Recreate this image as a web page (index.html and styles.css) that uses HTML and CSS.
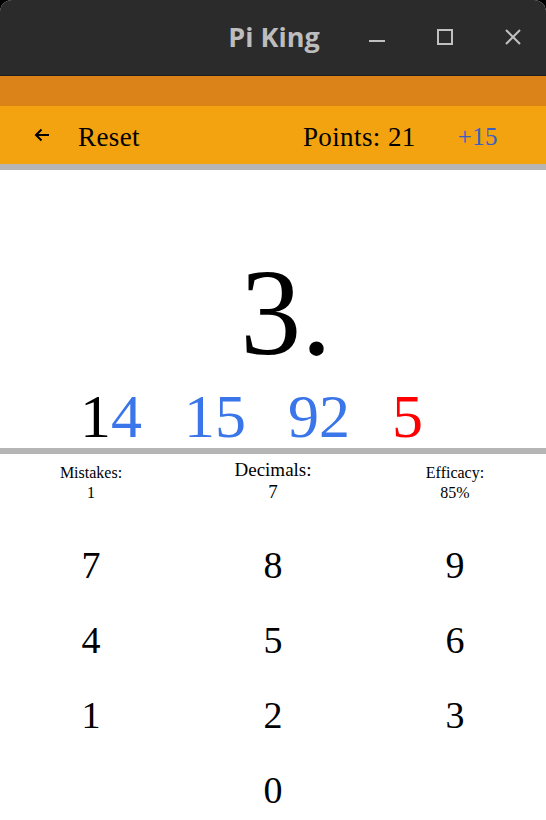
FILE: index.html
```html
<!DOCTYPE html>
<html>
<head>
<meta charset="utf-8">
<link rel="stylesheet" href="styles.css">
</head>
<body>
<div class="window">
  <header class="titlebar">
    <div class="title">Pi King</div>
    <div class="controls">
      <svg class="ctl" width="18" height="18" viewBox="0 0 18 18"><rect x="1" y="12" width="16" height="2" fill="#c0c0c0"/></svg>
      <svg class="ctl" width="18" height="18" viewBox="0 0 18 18"><rect x="2" y="2" width="14" height="14" fill="none" stroke="#c0c0c0" stroke-width="2"/></svg>
      <svg class="ctl" width="18" height="18" viewBox="0 0 18 18"><path d="M2 2 L16 16 M16 2 L2 16" stroke="#c0c0c0" stroke-width="2"/></svg>
    </div>
  </header>
  <div class="statusband"></div>
  <nav class="toolbar">
    <svg class="back" width="18" height="16" viewBox="0 0 18 16"><path d="M16 8 H3 M8.5 2.5 L3 8 L8.5 13.5" fill="none" stroke="#000" stroke-width="2"/></svg>
    <span class="reset">Reset</span>
    <span class="spacer"></span>
    <span class="points">Points: 21</span>
    <span class="bonus">+15</span>
  </nav>
  <div class="rule"></div>
  <main class="display">
    <div class="big">3.</div>
    <div class="digits">
      <span class="grp"><span class="ok">1</span><span class="new">4</span></span>
      <span class="grp new">15</span>
      <span class="grp new">92</span>
      <span class="grp bad">5</span>
    </div>
  </main>
  <div class="rule"></div>
  <section class="stats">
    <div class="stat small"><div>Mistakes:</div><div>1</div></div>
    <div class="stat mid"><div>Decimals:</div><div>7</div></div>
    <div class="stat small"><div>Efficacy:</div><div>85%</div></div>
  </section>
  <section class="keypad">
    <div class="key">7</div><div class="key">8</div><div class="key">9</div>
    <div class="key">4</div><div class="key">5</div><div class="key">6</div>
    <div class="key">1</div><div class="key">2</div><div class="key">3</div>
    <div class="key"></div><div class="key">0</div><div class="key"></div>
  </section>
</div>
</body>
</html>
```

FILE: styles.css
```css
html, body {
  margin: 0;
  padding: 0;
  background: #000;
}
.window {
  width: 546px;
  height: 820px;
  background: #fff;
  border-radius: 12px 12px 0 0;
  overflow: hidden;
  font-family: "Liberation Serif", serif;
  color: #000;
}
.titlebar {
  height: 76px;
  background: #2b2b2b;
  display: flex;
  align-items: center;
  position: relative;
  border-bottom: 1px solid #1e1e1e;
  box-sizing: border-box;
}
.title {
  flex: 1;
  text-align: center;
  padding-left: 2px;
  font-family: "Open Sans", "DejaVu Sans", sans-serif;
  font-weight: 700;
  font-size: 27px;
  color: #bdbdbd;
  margin-top: -2px;
}
.controls {
  position: absolute;
  right: 24px;
  top: 28px;
  display: flex;
  gap: 50px;
}
.statusband {
  height: 30px;
  background: #db8218;
}
.toolbar {
  height: 58px;
  background: #f2a30f;
  display: flex;
  align-items: center;
  padding: 0 48px 0 33px;
  font-size: 27px;
  letter-spacing: 0.4px;
}
.toolbar span { padding-top: 4px; }
.back { margin-right: 27px; margin-top: 0; }
.spacer { flex: 1; }
.points { margin-right: 42px; }
.bonus { color: #3860c4; font-size: 25px; }
.rule {
  height: 6px;
  background: #b5b5b5;
}
.display {
  height: 278px;
  display: flex;
  flex-direction: column;
}
.big {
  font-size: 122px;
  line-height: 1;
  text-align: center;
  margin-top: 82px;
  padding-left: 26px;
}
.digits {
  display: flex;
  gap: 42px;
  padding-left: 80px;
  font-size: 62px;
  line-height: 1;
  margin-top: 11px;
}
.ok { color: #000; }
.new { color: #3a75e9; }
.bad { color: #ff0000; }
.stats {
  display: grid;
  grid-template-columns: repeat(3, 1fr);
  padding-top: 5px;
  height: 61px;
  text-align: center;
}
.stat.small { font-size: 16px; line-height: 20px; padding-top: 4px; }
.stat.mid { font-size: 19px; line-height: 22px; }
.keypad {
  display: grid;
  grid-template-columns: repeat(3, 1fr);
  grid-auto-rows: 75px;
  text-align: center;
  font-size: 38px;
  align-items: center;
  margin-top: 7px;
}
```
